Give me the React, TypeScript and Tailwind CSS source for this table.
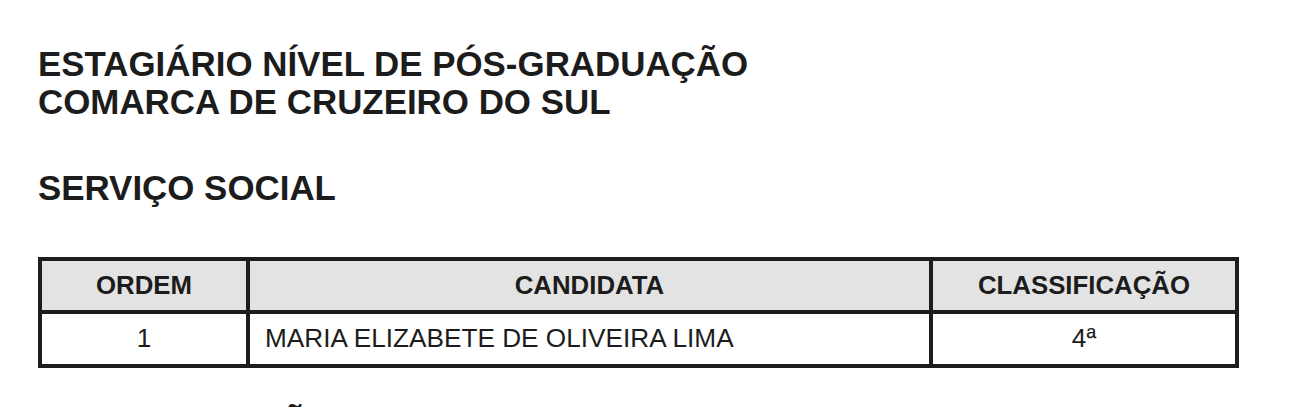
const rows = [{ ordem: "1", candidata: "MARIA ELIZABETE DE OLIVEIRA LIMA", classificacao: "4ª" }];

export default function App() {
  return (
    <div className="min-h-screen bg-white pl-[38px] pt-[45px] font-['Liberation_Sans',Arial,sans-serif] text-[#1c1c1c]">
      <h1 className="text-[34.9px] leading-[38px] font-bold">
        ESTAGIÁRIO NÍVEL DE PÓS-GRADUAÇÃO
        <br />
        COMARCA DE CRUZEIRO DO SUL
      </h1>
      <h2 className="mt-[48px] text-[34.9px] leading-[38px] font-bold">SERVIÇO SOCIAL</h2>

      <div className="mt-[50px] w-[1201px] border-4 border-[#1d1d1d]">
        <div className="flex h-[53px] border-b-4 border-[#1d1d1d] bg-[#e3e3e3] text-[25.8px] font-bold">
          <div className="flex w-[204px] items-center justify-center">ORDEM</div>
          <div className="flex w-[683px] items-center justify-center border-l-4 border-[#1d1d1d]">CANDIDATA</div>
          <div className="flex flex-1 items-center justify-center border-l-4 border-[#1d1d1d]">CLASSIFICAÇÃO</div>
        </div>
        {rows.map((row) => (
          <div key={row.ordem} className="flex h-[50px] text-[26.2px]">
            <div className="flex w-[204px] items-center justify-center">{row.ordem}</div>
            <div className="flex w-[683px] items-center border-l-4 border-[#1d1d1d] pl-[15px]">{row.candidata}</div>
            <div className="flex flex-1 items-center justify-center border-l-4 border-[#1d1d1d]">{row.classificacao}</div>
          </div>
        ))}
      </div>

      <h2 className="mt-[36px] text-[34.9px] leading-[38px] font-bold">ADMINISTRAÇÃO</h2>
    </div>
  );
}
